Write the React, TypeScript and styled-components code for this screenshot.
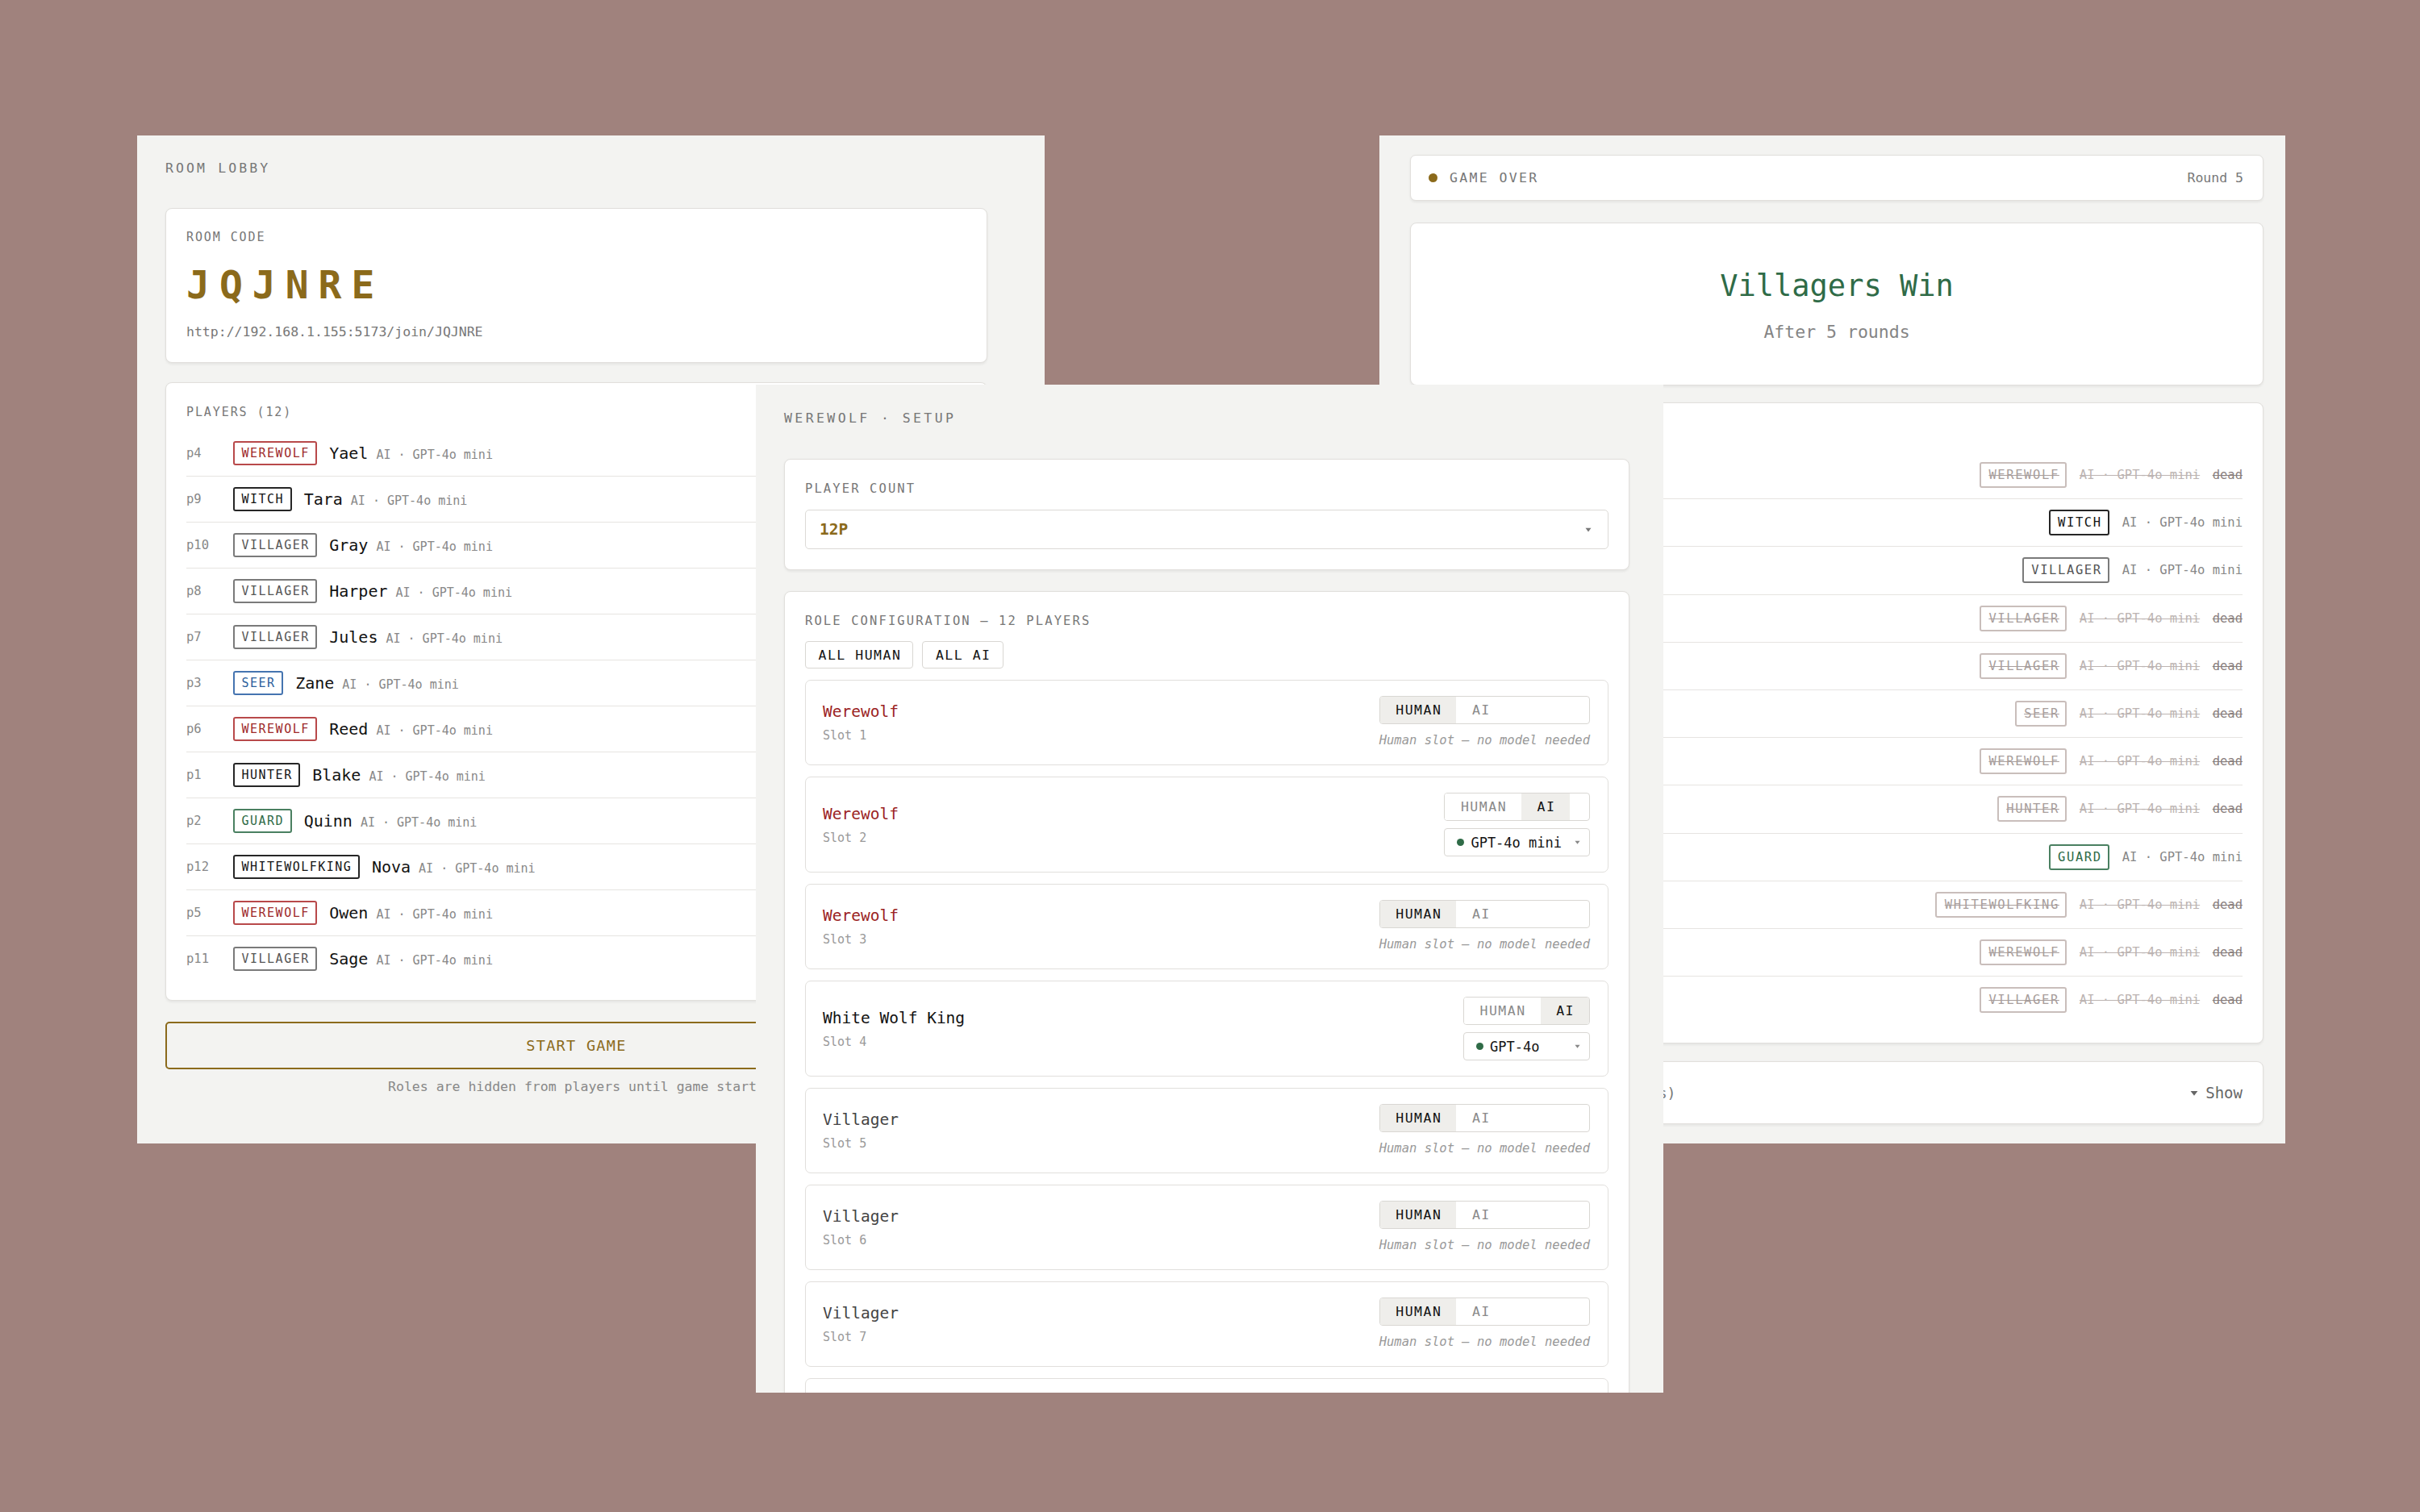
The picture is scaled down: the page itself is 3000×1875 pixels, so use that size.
import React from "react";
import styled, { createGlobalStyle } from "styled-components";

const mono = `"DejaVu Sans Mono", "Liberation Mono", monospace`;
const gold = "#8b6a1b";

type Role = "werewolf" | "witch" | "villager" | "seer" | "hunter" | "guard" | "whitewolfking";

const ROLE_TONES: Record<Role, { fg: string; border: string }> = {
  werewolf: { fg: "#9e2a2a", border: "#b8494a" },
  witch: { fg: "#141414", border: "#262626" },
  villager: { fg: "#555555", border: "#7a7a7a" },
  seer: { fg: "#2b5e9c", border: "#4574b0" },
  hunter: { fg: "#141414", border: "#262626" },
  guard: { fg: "#2f6b47", border: "#4a8061" },
  whitewolfking: { fg: "#141414", border: "#262626" },
};

interface Player {
  seat: string;
  name: string;
  role: Role;
  alive: boolean;
}

const players: Player[] = [
  { seat: "p4", name: "Yael", role: "werewolf", alive: false },
  { seat: "p9", name: "Tara", role: "witch", alive: true },
  { seat: "p10", name: "Gray", role: "villager", alive: true },
  { seat: "p8", name: "Harper", role: "villager", alive: false },
  { seat: "p7", name: "Jules", role: "villager", alive: false },
  { seat: "p3", name: "Zane", role: "seer", alive: false },
  { seat: "p6", name: "Reed", role: "werewolf", alive: false },
  { seat: "p1", name: "Blake", role: "hunter", alive: false },
  { seat: "p2", name: "Quinn", role: "guard", alive: true },
  { seat: "p12", name: "Nova", role: "whitewolfking", alive: false },
  { seat: "p5", name: "Owen", role: "werewolf", alive: false },
  { seat: "p11", name: "Sage", role: "villager", alive: false },
];

type Tone = "wolf" | "king" | "plain";

interface Slot {
  role: string;
  tone: Tone;
  model?: string;
}

const slots: Slot[] = [
  { role: "Werewolf", tone: "wolf" },
  { role: "Werewolf", tone: "wolf", model: "GPT-4o mini" },
  { role: "Werewolf", tone: "wolf" },
  { role: "White Wolf King", tone: "king", model: "GPT-4o" },
  { role: "Villager", tone: "plain" },
  { role: "Villager", tone: "plain" },
  { role: "Villager", tone: "plain" },
  { role: "Villager", tone: "plain" },
  { role: "Seer", tone: "plain" },
  { role: "Witch", tone: "plain" },
  { role: "Hunter", tone: "plain" },
  { role: "Guard", tone: "plain" },
];

const TONE_COLORS: Record<Tone, string> = {
  wolf: "#9b2323",
  king: "#121212",
  plain: "#444444",
};

const GlobalStyle = createGlobalStyle`
  html, body {
    margin: 0;
    padding: 0;
    background: #a0827d;
  }
  body {
    font-family: ${mono};
  }
  * {
    box-sizing: border-box;
  }
`;

const Desktop = styled.div`
  position: relative;
  width: 3000px;
  height: 1875px;
  background: #a0827d;
  overflow: hidden;
`;

const Window = styled.section<{ $x: number; $y: number; $w: number; $z: number }>`
  position: absolute;
  left: ${(p) => p.$x}px;
  top: ${(p) => p.$y}px;
  width: ${(p) => p.$w}px;
  height: 1250px;
  z-index: ${(p) => p.$z};
  background: #f3f3f1;
  overflow: hidden;
`;

const Pane = styled.div<{ $pad: string; $width: number }>`
  padding: ${(p) => p.$pad};
  width: ${(p) => p.$width}px;
  box-sizing: content-box;
  display: flex;
  flex-direction: column;
`;

const WindowTitle = styled.h1<{ $ls: number }>`
  margin: 0;
  font-size: 16.5px;
  font-weight: 400;
  line-height: 23px;
  letter-spacing: ${(p) => p.$ls}px;
  color: #777;
`;

const Card = styled.div<{ $mt: number; $pad: string }>`
  margin-top: ${(p) => p.$mt}px;
  padding: ${(p) => p.$pad};
  background: #fff;
  border: 1px solid #e1dfdc;
  border-radius: 8px;
  box-shadow: 0 1.5px 3px rgba(0, 0, 0, 0.06);
`;

const Label = styled.div<{ $size: number; $ls: number }>`
  font-size: ${(p) => p.$size}px;
  letter-spacing: ${(p) => p.$ls}px;
  line-height: 21px;
  color: #777;
`;

const Caret = ({ size, color }: { size: number; color: string }) => (
  <svg width={size} height={size * 0.75} viewBox="0 0 8 6" aria-hidden="true">
    <path d="M0.5 0.8 L7.5 0.8 L4 5.4 Z" fill={color} />
  </svg>
);

/* ---------- lobby ---------- */

const RoomCode = styled.div`
  margin: 19px 0 18px;
  font-size: 48px;
  font-weight: 700;
  line-height: 58px;
  letter-spacing: 12px;
  color: ${gold};
`;

const JoinUrl = styled.div`
  font-size: 16.5px;
  line-height: 23px;
  color: #777;
`;

const PlayerList = styled.div<{ $mt: number }>`
  margin-top: ${(p) => p.$mt}px;
  display: flex;
  flex-direction: column;
`;

const PlayerRow = styled.div<{ $pad: number }>`
  display: flex;
  align-items: center;
  padding: ${(p) => p.$pad}px 0;
  border-bottom: 1px solid #e6e4e1;

  &:last-child {
    border-bottom: none;
  }
`;

const Seat = styled.span`
  width: 57.5px;
  flex-shrink: 0;
  font-size: 15.5px;
  color: #888;
`;

const Badge = styled.span<{ $role: Role; $dead?: boolean; $big?: boolean }>`
  display: inline-flex;
  align-items: center;
  flex-shrink: 0;
  height: ${(p) => (p.$big ? 32 : 30)}px;
  padding: 0 7.5px 0 ${(p) => (p.$big ? 9.5 : 9)}px;
  border: 2px solid ${(p) => (p.$dead ? "#c9bebb" : ROLE_TONES[p.$role].border)};
  border-radius: 3px;
  background: #fff;
  font-size: ${(p) => (p.$big ? 15.5 : 15)}px;
  letter-spacing: ${(p) => (p.$big ? 1.6 : 1.5)}px;
  color: ${(p) => (p.$dead ? "#a89e9c" : ROLE_TONES[p.$role].fg)};
  text-decoration: ${(p) => (p.$dead ? "line-through" : "none")};
`;

const NameLine = styled.span`
  display: inline-flex;
  align-items: baseline;
  margin-left: 15px;
`;

const PlayerName = styled.span`
  font-size: 20px;
  color: #121212;
`;

const Meta = styled.span<{ $dead?: boolean; $big?: boolean; $gap: number }>`
  margin-left: ${(p) => p.$gap}px;
  font-size: ${(p) => (p.$big ? 15.5 : 15)}px;
  color: ${(p) => (p.$dead ? "#bcb4b2" : "#888")};
  text-decoration: ${(p) => (p.$dead ? "line-through" : "none")};
`;

const StartButton = styled.button`
  margin-top: 26px;
  height: 59px;
  width: 100%;
  border: 2px solid ${gold};
  border-radius: 5px;
  background: transparent;
  font-family: ${mono};
  font-size: 18.5px;
  letter-spacing: 1.3px;
  color: ${gold};
`;

const Footnote = styled.p`
  margin: 10px 0 0;
  text-align: center;
  font-size: 16.5px;
  line-height: 23px;
  color: #888;
`;

/* ---------- setup ---------- */

const CountSelect = styled.div`
  margin-top: 15px;
  height: 49px;
  display: flex;
  align-items: center;
  justify-content: space-between;
  padding: 0 20px 0 17px;
  border: 1px solid #dcdad6;
  border-radius: 5px;
  background: #fff;
  font-size: 19.5px;
  font-weight: 700;
  color: ${gold};
`;

const BulkRow = styled.div`
  margin-top: 14px;
  display: flex;
  gap: 11px;
`;

const BulkButton = styled.button`
  height: 34px;
  padding: 0 14px 0 15.5px;
  border: 1px solid #d9d7d3;
  border-radius: 4px;
  background: #fff;
  font-family: ${mono};
  font-size: 16.5px;
  letter-spacing: 1.5px;
  color: #141414;
`;

const SlotList = styled.div`
  margin-top: 14px;
  display: flex;
  flex-direction: column;
  gap: 14px;
`;

const SlotCard = styled.div`
  display: flex;
  align-items: center;
  justify-content: space-between;
  padding: 19px 22px 19px 21px;
  border: 1px solid #e1dfdc;
  border-radius: 7px;
  background: #fff;
`;

const SlotInfo = styled.div`
  display: flex;
  flex-direction: column;
`;

const SlotRole = styled.span<{ $tone: Tone }>`
  font-size: 19.5px;
  line-height: 27px;
  color: ${(p) => TONE_COLORS[p.$tone]};
`;

const SlotNumber = styled.span`
  margin-top: 6px;
  font-size: 15px;
  line-height: 21px;
  color: #999;
`;

const SlotControls = styled.div`
  display: flex;
  flex-direction: column;
  align-items: stretch;
  gap: 9px;
`;

const Toggle = styled.div`
  display: flex;
  height: 35px;
  border: 1px solid #d9d7d3;
  border-radius: 4px;
  background: #fff;
  overflow: hidden;
`;

const ToggleOption = styled.span<{ $active: boolean }>`
  display: flex;
  align-items: center;
  padding: 0 18px 0 19.5px;
  font-size: 16.5px;
  letter-spacing: 1.5px;
  background: ${(p) => (p.$active ? "#efeeeb" : "#fff")};
  color: ${(p) => (p.$active ? "#121212" : "#8a8a8a")};
`;

const ModelHint = styled.span`
  font-size: 15.5px;
  line-height: 22px;
  font-style: italic;
  color: #999;
  text-align: right;
`;

const ModelSelect = styled.div`
  height: 35px;
  display: flex;
  align-items: center;
  gap: 8px;
  padding: 0 11px 0 15px;
  border: 1px solid #d9d7d3;
  border-radius: 4px;
  background: #fff;
  font-size: 17px;
  color: #141414;
`;

const StatusDot = styled.span<{ $size: number; $color: string }>`
  width: ${(p) => p.$size}px;
  height: ${(p) => p.$size}px;
  border-radius: 50%;
  flex-shrink: 0;
  background: ${(p) => p.$color};
`;

const ModelCaret = styled.span`
  margin-left: auto;
  padding-left: 8px;
  display: flex;
  align-items: center;
`;

/* ---------- game over ---------- */

const StatusBar = styled(Card)`
  height: 57px;
  display: flex;
  align-items: center;
  gap: 15px;
  border-radius: 7px;
`;

const StatusText = styled.span<{ $ls: number }>`
  font-size: 16.5px;
  letter-spacing: ${(p) => p.$ls}px;
  color: #777;

  &:last-child {
    margin-left: auto;
  }
`;

const WinnerCard = styled(Card)`
  height: 202px;
  display: flex;
  flex-direction: column;
  align-items: center;
  justify-content: center;
  gap: 20px;
`;

const WinnerTitle = styled.h2`
  margin: 6px 0 0;
  font-size: 37px;
  font-weight: 400;
  line-height: 44px;
  color: #2f6b47;
`;

const WinnerSub = styled.div`
  font-size: 21.5px;
  line-height: 30px;
  color: #858585;
`;

const FateRow = styled(PlayerRow)`
  justify-content: space-between;
`;

const Who = styled.span`
  display: inline-flex;
  align-items: baseline;
  gap: 10px;
  font-size: 20px;
  color: #121212;
`;

const Fate = styled.span`
  display: inline-flex;
  align-items: center;
  gap: 15.5px;
`;

const DeadMark = styled.span`
  font-size: 15.5px;
  color: #8a807e;
  text-decoration: line-through;
`;

const LogCard = styled(Card)`
  height: 78px;
  display: flex;
  align-items: center;
  justify-content: space-between;
`;

const LogTitle = styled.span`
  font-size: 18px;
  color: #777;
`;

const ShowToggle = styled.span`
  display: inline-flex;
  align-items: center;
  gap: 9px;
  font-size: 19px;
  color: #666;
`;

function LobbyWindow() {
  return (
    <Window $x={170} $y={168} $w={1125} $z={1}>
      <Pane $pad="29px 35px" $width={1019}>
        <WindowTitle $ls={3.1}>ROOM LOBBY</WindowTitle>
        <Card $mt={38} $pad="25px 25px 26px">
          <Label $size={15} $ls={1.9}>
            ROOM CODE
          </Label>
          <RoomCode>JQJNRE</RoomCode>
          <JoinUrl>http://192.168.1.155:5173/join/JQJNRE</JoinUrl>
        </Card>
        <Card $mt={24} $pad="25.5px 25px 23px">
          <Label $size={15} $ls={1.9}>
            PLAYERS (12)
          </Label>
          <PlayerList $mt={12}>
            {players.map((pl) => (
              <PlayerRow key={pl.seat} $pad={13}>
                <Seat>{pl.seat}</Seat>
                <Badge $role={pl.role}>{pl.role.toUpperCase()}</Badge>
                <NameLine>
                  <PlayerName>{pl.name}</PlayerName>
                  <Meta $gap={10}>AI · GPT-4o mini</Meta>
                </NameLine>
              </PlayerRow>
            ))}
          </PlayerList>
        </Card>
        <StartButton>START GAME</StartButton>
        <Footnote>Roles are hidden from players until game starts</Footnote>
      </Pane>
    </Window>
  );
}

function SlotRow({ slot, index }: { slot: Slot; index: number }) {
  const ai = Boolean(slot.model);
  return (
    <SlotCard>
      <SlotInfo>
        <SlotRole $tone={slot.tone}>{slot.role}</SlotRole>
        <SlotNumber>Slot {index + 1}</SlotNumber>
      </SlotInfo>
      <SlotControls>
        <Toggle>
          <ToggleOption $active={!ai}>HUMAN</ToggleOption>
          <ToggleOption $active={ai}>AI</ToggleOption>
        </Toggle>
        {ai ? (
          <ModelSelect>
            <StatusDot $size={9} $color="#2f6b47" />
            <span>{slot.model}</span>
            <ModelCaret>
              <Caret size={7} color="#888" />
            </ModelCaret>
          </ModelSelect>
        ) : (
          <ModelHint>Human slot — no model needed</ModelHint>
        )}
      </SlotControls>
    </SlotCard>
  );
}

function SetupWindow() {
  return (
    <Window $x={937} $y={477} $w={1125} $z={3}>
      <Pane $pad="30px 35px" $width={1048}>
        <WindowTitle $ls={3.4}>WEREWOLF · SETUP</WindowTitle>
        <Card $mt={39} $pad="26px 25px 25px">
          <Label $size={15.5} $ls={2.1}>
            PLAYER COUNT
          </Label>
          <CountSelect>
            <span>12P</span>
            <Caret size={8} color="#777" />
          </CountSelect>
        </Card>
        <Card $mt={26} $pad="26px 25px 25px">
          <Label $size={15.5} $ls={2.1}>
            ROLE CONFIGURATION — 12 PLAYERS
          </Label>
          <BulkRow>
            <BulkButton>ALL HUMAN</BulkButton>
            <BulkButton>ALL AI</BulkButton>
          </BulkRow>
          <SlotList>
            {slots.map((s, i) => (
              <SlotRow key={i} slot={s} index={i} />
            ))}
          </SlotList>
        </Card>
      </Pane>
    </Window>
  );
}

function GameOverWindow() {
  return (
    <Window $x={1710} $y={168} $w={1123} $z={1}>
      <Pane $pad="24px 27px 24px 38px" $width={1058}>
        <StatusBar $mt={0} $pad="0 24px 0 22px">
          <StatusDot $size={11} $color={gold} />
          <StatusText $ls={2.35}>GAME OVER</StatusText>
          <StatusText $ls={0}>Round 5</StatusText>
        </StatusBar>
        <WinnerCard $mt={27} $pad="0">
          <WinnerTitle>Villagers Win</WinnerTitle>
          <WinnerSub>After 5 rounds</WinnerSub>
        </WinnerCard>
        <Card $mt={21} $pad="25px 25px 24px">
          <Label $size={15.5} $ls={2.1}>
            PLAYERS
          </Label>
          <PlayerList $mt={14}>
            {players.map((pl) => (
              <FateRow key={pl.seat} $pad={13.1}>
                <Who>
                  <Seat>{pl.seat}</Seat>
                  {pl.name}
                </Who>
                <Fate>
                  <Badge $role={pl.role} $dead={!pl.alive} $big>
                    {pl.role.toUpperCase()}
                  </Badge>
                  <Meta $dead={!pl.alive} $big $gap={0}>
                    AI · GPT-4o mini
                  </Meta>
                  {!pl.alive && <DeadMark>dead</DeadMark>}
                </Fate>
              </FateRow>
            ))}
          </PlayerList>
        </Card>
        <LogCard $mt={22} $pad="0 25px">
          <LogTitle>Game transcript (126 events)</LogTitle>
          <ShowToggle>
            <Caret size={10} color="#666" />
            Show
          </ShowToggle>
        </LogCard>
      </Pane>
    </Window>
  );
}

export default function App() {
  return (
    <>
      <GlobalStyle />
      <Desktop>
        <LobbyWindow />
        <GameOverWindow />
        <SetupWindow />
      </Desktop>
    </>
  );
}
